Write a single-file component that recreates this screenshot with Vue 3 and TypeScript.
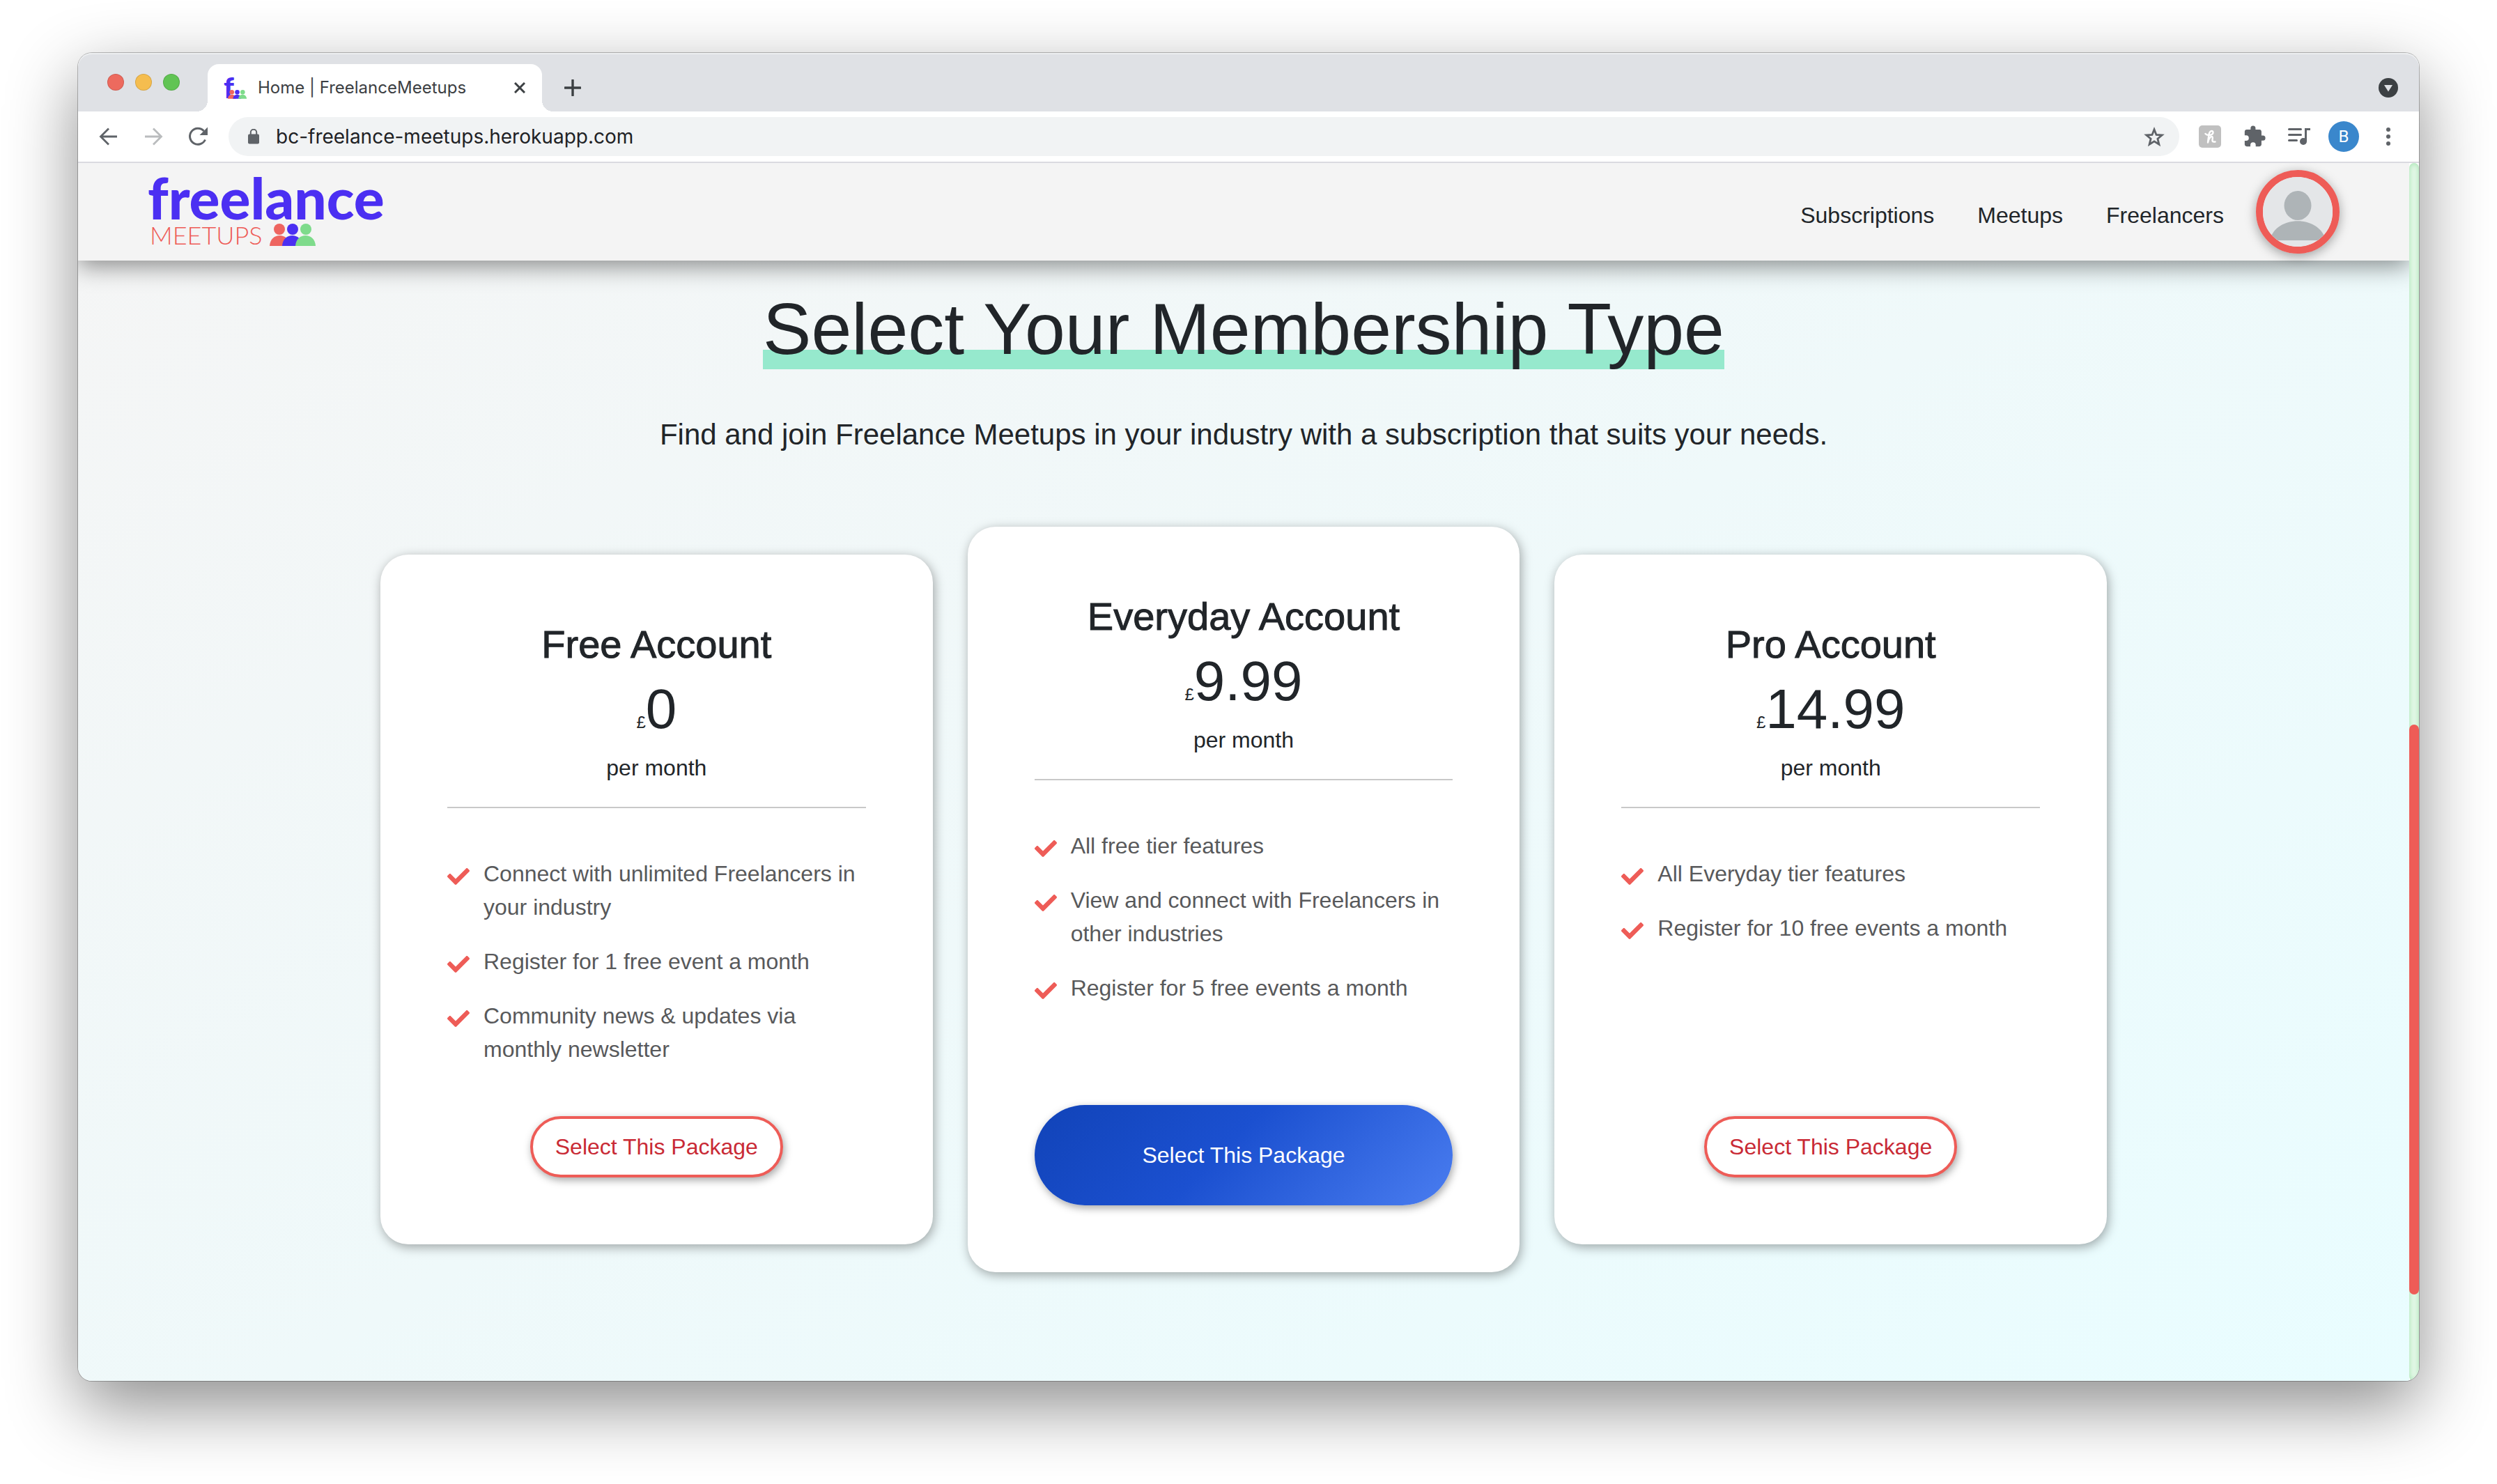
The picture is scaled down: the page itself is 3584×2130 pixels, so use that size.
<script setup lang="ts">
interface Plan {
  name: string
  price: string
  features: string[]
  featured: boolean
}

const navLinks: string[] = ['Subscriptions', 'Meetups', 'Freelancers']

const plans: Plan[] = [
  {
    name: 'Free Account',
    price: '0',
    features: [
      'Connect with unlimited Freelancers in your industry',
      'Register for 1 free event a month',
      'Community news & updates via monthly newsletter',
    ],
    featured: false,
  },
  {
    name: 'Everyday Account',
    price: '9.99',
    features: [
      'All free tier features',
      'View and connect with Freelancers in other industries',
      'Register for 5 free events a month',
    ],
    featured: true,
  },
  {
    name: 'Pro Account',
    price: '14.99',
    features: ['All Everyday tier features', 'Register for 10 free events a month'],
    featured: false,
  },
]
</script>

<template>
  <div class="window">
    <div class="tabstrip">
      <div class="lights">
        <button class="light red" aria-label="Close window"></button>
        <button class="light yellow" aria-label="Minimise window"></button>
        <button class="light green" aria-label="Zoom window"></button>
      </div>
      <div class="tab">
        <svg class="favicon" viewBox="0 0 32 32" aria-hidden="true">
          <text x="-1" y="31" font-family="Lato" font-weight="900" font-size="41" fill="#4b2ff2">f</text>
          <g transform="translate(5 19) scale(0.41 0.4)">
            <path d="M0 32C1 12 28 12 29 32Z" fill="#ee6560" />
            <circle cx="14" cy="8" r="8" fill="#ee6560" />
            <path d="M18 32C19 12 46 12 47 32Z" fill="#4b2ff2" />
            <circle cx="33" cy="8" r="8" fill="#4b2ff2" />
            <path d="M37 32C38 12 65 12 66 32Z" fill="#7edb8b" />
            <circle cx="52" cy="8" r="8" fill="#7edb8b" />
          </g>
        </svg>
        <span class="tab-title">Home | FreelanceMeetups</span>
        <button class="tab-close" aria-label="Close tab">
          <svg width="16" height="16" viewBox="0 0 16 16"><path d="M1 1L15 15M15 1L1 15" stroke="#3c4043" stroke-width="3" /></svg>
        </button>
      </div>
      <button class="cell" aria-label="New tab">
        <svg width="24" height="24" viewBox="0 0 24 24"><path d="M12 1V23M1 12H23" stroke="#3c4043" stroke-width="3.4" stroke-linecap="round" /></svg>
      </button>
      <button class="tab-search" aria-label="Search tabs">
        <svg width="28" height="28" viewBox="0 0 28 28"><circle cx="14" cy="14" r="14" fill="#3c4043" /><path d="M8 10H20L14 19.5Z" fill="#dfe1e5" /></svg>
      </button>
    </div>

    <div class="toolbar">
      <button class="cell" aria-label="Back">
        <svg width="28" height="28" viewBox="0 0 28 28"><path d="M26 14H3M14 2.500L2.500 14L14 25.500" fill="none" stroke="#5f6368" stroke-width="2.800" /></svg>
      </button>
      <button class="cell" aria-label="Forward">
        <svg width="28" height="28" viewBox="0 0 28 28"><path d="M2 14H25M14 2.500L25.500 14L14 25.500" fill="none" stroke="#babcbe" stroke-width="2.800" /></svg>
      </button>
      <button class="cell" aria-label="Reload">
        <svg width="30" height="30" viewBox="0 0 30 30"><path d="M25.500 19.500A11.500 11.500 0 1 1 23.500 7" fill="none" stroke="#5f6368" stroke-width="3" /><path d="M29 1.500V13H17.500Z" fill="#5f6368" /></svg>
      </button>
      <div class="address">
        <svg class="lock" width="16" height="22" viewBox="0 0 16 22" aria-hidden="true"><rect x="0" y="7.500" width="16" height="14" rx="2" fill="#5f6368" /><path d="M3.800 8.500V5a4.200 4.200 0 0 1 8.400 0V8.500" fill="none" stroke="#5f6368" stroke-width="2" /></svg>
        <input class="url" type="text" aria-label="Address" value="bc-freelance-meetups.herokuapp.com" />
        <button class="bookmark" aria-label="Bookmark this page">
          <svg width="30" height="29" viewBox="0 0 30 29"><path d="M15 3.800L18 11.400L26.200 12L19.900 17.200L21.900 25.200L15 20.800L8.100 25.200L10.100 17.200L3.800 12L12 11.400Z" fill="none" stroke="#5f6368" stroke-width="2.800" /></svg>
        </button>
      </div>
      <button class="cell" aria-label="Honey extension">
        <svg width="32" height="32" viewBox="0 0 32 32"><rect width="32" height="32" rx="5" fill="#c0c0c0" /><path d="M9.500 12C12.500 15.500 20.500 14 20.500 10C20.500 6.500 15.500 7.500 14.500 13L13 24.500C14.500 18 18 14.500 19.500 16.500C21 18.500 16.500 24.500 23.500 23.500" fill="none" stroke="#fff" stroke-width="2.400" stroke-linecap="round" stroke-linejoin="round" /></svg>
      </button>
      <button class="cell" aria-label="Extensions">
        <svg width="34" height="34" viewBox="0 0 24 24"><path fill="#5f6368" d="M20.500 11H19V7c0-1.100-.9-2-2-2h-4V3.500a2.500 2.500 0 0 0-5 0V5H4c-1.100 0-2 .9-2 2v3.800h1.500a2.700 2.700 0 0 1 0 5.400H2V20c0 1.100.9 2 2 2h3.800v-1.500a2.700 2.700 0 0 1 5.400 0V22H17c1.100 0 2-.9 2-2v-4h1.500a2.500 2.500 0 0 0 0-5z" /></svg>
      </button>
      <button class="cell" aria-label="Media controls">
        <svg width="32" height="26" viewBox="0 0 32 26"><path d="M1.500 2.500H18.500M1.500 10.500H18.500M1.500 18.500H12.500" stroke="#5f6368" stroke-width="3" stroke-linecap="round" /><path d="M25.500 20V2.500H32" fill="none" stroke="#5f6368" stroke-width="3" /><circle cx="22" cy="20" r="5" fill="#5f6368" /></svg>
      </button>
      <button class="cell" aria-label="Profile"><span class="profile">B</span></button>
      <button class="cell" aria-label="Menu">
        <svg width="6" height="26" viewBox="0 0 6 26"><g fill="#5f6368"><circle cx="3" cy="3" r="3" /><circle cx="3" cy="13" r="3" /><circle cx="3" cy="23" r="3" /></g></svg>
      </button>
    </div>

    <div class="viewport">
      <div class="page">
        <header class="site-header">
          <a class="logo" href="#">
            <span class="logo-top">freelance</span>
            <span class="logo-bottom">
              MEETUPS
              <svg width="66" height="32" viewBox="0 0 66 32" aria-hidden="true">
                <path d="M0 32C1 12 28 12 29 32Z" fill="#ee6560" />
                <circle cx="14" cy="8" r="8" fill="#ee6560" />
                <path d="M18 32C19 12 46 12 47 32Z" fill="#4b2ff2" />
                <circle cx="33" cy="8" r="8" fill="#4b2ff2" />
                <path d="M37 32C38 12 65 12 66 32Z" fill="#7edb8b" />
                <circle cx="52" cy="8" r="8" fill="#7edb8b" />
              </svg>
            </span>
          </a>
          <nav class="site-nav">
            <a v-for="link in navLinks" :key="link" href="#">{{ link }}</a>
          </nav>
          <button class="avatar" aria-label="Your account">
            <svg width="100" height="100" viewBox="0 0 100 100"><rect width="100" height="100" fill="#e4e6e8" /><ellipse cx="50" cy="41" rx="19.500" ry="21" fill="#aeb4b7" /><path d="M10 91C18 54 82 54 90 91Z" fill="#aeb4b7" /></svg>
          </button>
        </header>

        <main class="content">
          <h1>Select Your Membership Type</h1>
          <p class="lead">Find and join Freelance Meetups in your industry with a subscription that suits your needs.</p>
          <div class="plans">
            <section v-for="plan in plans" :key="plan.name" class="card" :class="{ featured: plan.featured }">
              <h2>{{ plan.name }}</h2>
              <p class="price"><small>£</small>{{ plan.price }}</p>
              <p class="period">per month</p>
              <hr />
              <ul>
                <li v-for="feature in plan.features" :key="feature">
                  <svg class="check" width="32" height="32" viewBox="0 0 512 512" aria-hidden="true"><path fill="#ee5c57" d="M173.898 439.404l-166.400-166.400c-9.997-9.997-9.997-26.206 0-36.204l36.203-36.204c9.997-9.998 26.207-9.998 36.204 0L192 312.690 432.095 72.596c9.997-9.997 26.207-9.997 36.204 0l36.203 36.204c9.997 9.997 9.997 26.206 0 36.204l-294.400 294.401c-9.998 9.997-26.207 9.997-36.204-.001z" /></svg>
                  <span>{{ feature }}</span>
                </li>
              </ul>
              <button class="select">Select This Package</button>
            </section>
          </div>
        </main>
      </div>
      <div class="scrollbar"><div class="thumb"></div></div>
    </div>
  </div>
</template>

<style>
body {
  background: #fff;
}
#app {
  display: flow-root;
}
</style>

<style scoped>
.window,
.window * {
  box-sizing: border-box;
}
.window {
  display: flex;
  flex-direction: column;
  min-height: calc(100vh - 224px);
  margin: 76px 112px 148px;
  border-radius: 20px;
  font-family: "Liberation Sans", Arial, sans-serif;
  font-size: 32px;
  line-height: 48px;
  color: #212529;
  box-shadow: 0 0 0 1px rgba(0, 0, 0, 0.25), 0 36px 100px rgba(0, 0, 0, 0.45);
}
button {
  padding: 0;
  border: 0;
  background: none;
  font: inherit;
  color: inherit;
}
svg {
  display: block;
}
h1,
h2,
p,
ul,
hr {
  margin: 0;
  padding: 0;
}
a {
  color: inherit;
  text-decoration: none;
}

.tabstrip {
  display: flex;
  align-items: flex-end;
  height: 84px;
  padding: 0 30px 0 42px;
  border-radius: 20px 20px 0 0;
  background: #dfe1e5;
  box-shadow: inset 0 2px 0 #eceef0;
}
.lights {
  display: flex;
  gap: 16px;
  align-self: center;
  margin-right: 40px;
}
.light {
  width: 24px;
  height: 24px;
  border: 1px solid rgba(0, 0, 0, 0.12);
  border-radius: 50%;
}
.red { background: #ed6a5e; }
.yellow { background: #f5bd4f; }
.green { background: #61c454; }
.tab {
  position: relative;
  display: flex;
  align-items: center;
  width: 480px;
  height: 68px;
  padding: 0 24px;
  border-radius: 16px 16px 0 0;
  background: #fff;
}
.tab::before,
.tab::after {
  content: "";
  position: absolute;
  bottom: 0;
  width: 16px;
  height: 16px;
}
.tab::before {
  right: 100%;
  background: radial-gradient(circle at 0 0, transparent 16px, #fff 16px);
}
.tab::after {
  left: 100%;
  background: radial-gradient(circle at 100% 0, transparent 16px, #fff 16px);
}
.favicon {
  width: 32px;
  height: 32px;
  margin-right: 16px;
  overflow: visible;
}
.tab-title {
  flex: 1;
  font: 24px/32px Inter, sans-serif;
  color: #3c4043;
  white-space: nowrap;
}
.cell {
  display: flex;
  align-items: center;
  justify-content: center;
  width: 64px;
  height: 68px;
}
.tabstrip .cell {
  margin-left: 12px;
}
.tab-search {
  margin: 0 0 20px auto;
}

.toolbar {
  display: flex;
  align-items: center;
  height: 74px;
  padding: 0 12px;
  border-bottom: 2px solid #dadae0;
  background: #fff;
}
.address {
  display: flex;
  flex: 1;
  align-items: center;
  height: 56px;
  margin: 0 12px;
  padding: 0 21px 0 28px;
  border-radius: 28px;
  background: #f1f3f4;
}
.url {
  flex: 1;
  min-width: 0;
  margin-left: 24px;
  padding: 0;
  border: 0;
  outline: 0;
  background: none;
  font: 28px/40px Inter, sans-serif;
  color: #202124;
}
.profile {
  width: 44px;
  height: 44px;
  border-radius: 50%;
  background: #3a87cc;
  font: 24px/44px Roboto, sans-serif;
  color: #fff;
}

.viewport {
  display: flex;
  flex: 1;
  overflow: hidden;
  border-radius: 0 0 20px 20px;
}
.page {
  display: flex;
  flex: 1;
  flex-direction: column;
  overflow: hidden;
  background: linear-gradient(148deg, #f5f5f5, #e9fdff);
}
.scrollbar {
  display: grid;
  grid-template-rows: 806fr 818fr 124fr;
  width: 14px;
  border-radius: 7px;
  background: #e6f8e9;
  box-shadow: inset 0 0 8px #9fe3ac;
}
.thumb {
  grid-row: 2;
  border-radius: 7px;
  background: #ee5c57;
}

.site-header {
  display: flex;
  align-items: center;
  height: 140px;
  padding: 0 100px;
  background: #f4f4f4;
  box-shadow: 0 8px 32px rgba(0, 0, 0, 0.44);
}
.logo {
  display: flex;
  flex-direction: column;
  gap: 2px;
  font-family: Lato, sans-serif;
}
.logo-top {
  font-size: 82px;
  font-weight: 900;
  line-height: 64px;
  color: #4b2ff2;
}
.logo-bottom {
  display: flex;
  gap: 10px;
  align-items: center;
  padding-left: 3px;
  font-size: 36px;
  font-weight: 300;
  line-height: 40px;
  color: #ee5c57;
}
.site-nav {
  display: flex;
  gap: 62px;
  margin: 0 46px 0 auto;
  padding-top: 10px;
}
.avatar {
  width: 120px;
  height: 120px;
  border: 10px solid #ee5c57;
  border-radius: 50%;
  overflow: hidden;
  box-shadow: 0 4px 16px rgba(0, 0, 0, 0.35);
}

.content {
  display: flex;
  flex-direction: column;
  align-items: center;
  padding: 36px 40px 156px;
}
h1 {
  background: linear-gradient(#96e9cd, #96e9cd) 0 92px / 100% 28px no-repeat;
  font-size: 104px;
  font-weight: 400;
  line-height: 124px;
}
.lead {
  margin-top: 60px;
  font-size: 42px;
  line-height: 60px;
}
.plans {
  display: grid;
  grid-template-columns: repeat(3, 1fr);
  gap: 50px;
  align-items: center;
  width: 100%;
  max-width: 2478px;
  margin-top: 102px;
}
.card {
  display: flex;
  flex-direction: column;
  align-items: center;
  padding: 96px;
  border-radius: 40px;
  background: #fff;
  box-shadow: 2px 4px 16px rgba(0, 0, 0, 0.35);
}
h2 {
  font-size: 56px;
  font-weight: 400;
  line-height: 66px;
  -webkit-text-stroke: 1px currentColor;
}
.price {
  margin: 12px 0;
  font-size: 80px;
  line-height: 96px;
}
.price small {
  font-size: 24px;
  line-height: 24px;
}
hr {
  width: 100%;
  height: 2px;
  margin-top: 32px;
  border: 0;
  background: #c8c8c8;
}
ul {
  display: flex;
  flex-direction: column;
  gap: 30px;
  width: 100%;
  min-height: 300px;
  margin: 70px 0 72px;
  list-style: none;
  color: #58595b;
}
li {
  display: flex;
  gap: 20px;
}
.check {
  flex: none;
  margin-top: 12px;
}
.select {
  height: 88px;
  padding: 0 32px;
  border: 4px solid #ee5c57;
  border-radius: 44px;
  background: #fff;
  color: #c92a35;
  box-shadow: 2px 4px 12px rgba(0, 0, 0, 0.35);
}
.featured ul {
  margin-bottom: 96px;
}
.featured .select {
  width: 100%;
  height: 144px;
  border: 0;
  border-radius: 72px;
  background: linear-gradient(135deg, #1143b8, #1b50d0 45%, #4a7df0);
  color: #fff;
}
</style>
